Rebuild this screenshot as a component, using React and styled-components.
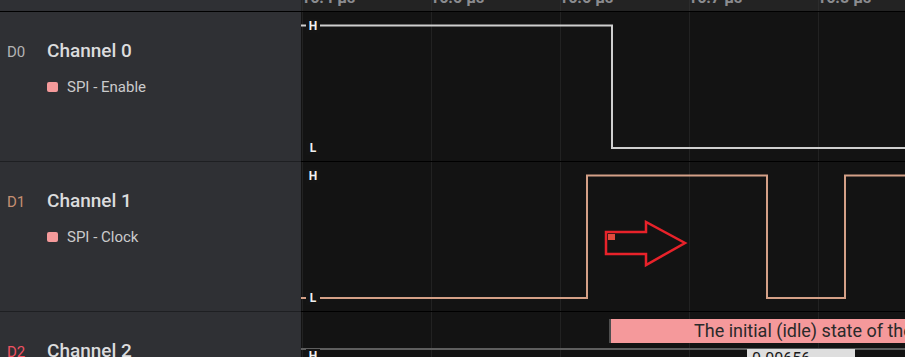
import React from "react";
import styled, {createGlobalStyle} from "styled-components";

const GlobalStyle = createGlobalStyle`
  html, body {
    margin: 0;
    padding: 0;
    background: #131313;
  }
  body {
    font-family: Roboto, "Liberation Sans", sans-serif;
  }
`;

const PANEL_WIDTH = 301;
const GRID_STEP = 129;
const ROW_HEIGHT = 149;
const HIGH_Y = 13.5;
const LOW_Y = 136;

const ticks = ["16.4 µs", "16.5 µs", "16.6 µs", "16.7 µs", "16.8 µs"];

const channels = [
  {
    index: "D0",
    name: "Channel 0",
    indexColor: "#b4b4b4",
    analyzer: "SPI - Enable",
    stroke: "#cfcfcf",
    // edges in trace-local x, starting level
    start: "high",
    edges: [311],
  },
  {
    index: "D1",
    name: "Channel 1",
    indexColor: "#c58f72",
    analyzer: "SPI - Clock",
    stroke: "#d4a087",
    start: "low",
    edges: [286, 466, 544],
  },
  {
    index: "D2",
    name: "Channel 2",
    indexColor: "#ef5262",
    analyzer: null,
  },
];

function buildPath(start, edges, width) {
  let high = start === "high";
  let d = `M0 ${high ? HIGH_Y : LOW_Y}`;
  edges.forEach((x) => {
    d += ` H${x}`;
    high = !high;
    d += ` V${high ? HIGH_Y : LOW_Y}`;
  });
  d += ` H${width}`;
  return d;
}

export default function App() {
  return (
    <>
      <GlobalStyle />
      <Screen>
        <HeaderRow>
          <HeaderSide />
          <Ruler>
            {ticks.map((t) => (
              <Tick key={t}>{t}</Tick>
            ))}
          </Ruler>
        </HeaderRow>

        {channels.map((ch) => (
          <ChannelRow key={ch.index}>
            <ChannelInfo>
              <NameLine>
                <Index color={ch.indexColor}>{ch.index}</Index>
                <Name>{ch.name}</Name>
              </NameLine>
              {ch.analyzer && (
                <AnalyzerLine>
                  <Swatch />
                  <AnalyzerName>{ch.analyzer}</AnalyzerName>
                </AnalyzerLine>
              )}
            </ChannelInfo>

            <Trace>
              {ch.edges ? (
                <>
                  <Wave width="604" height={ROW_HEIGHT}>
                    <path
                      d={buildPath(ch.start, ch.edges, 620)}
                      fill="none"
                      stroke={ch.stroke}
                      strokeWidth="2"
                    />
                  </Wave>
                  <LevelTag top={HIGH_Y}>H</LevelTag>
                  <LevelTag top={LOW_Y}>L</LevelTag>
                  {ch.index === "D1" && (
                    <Arrow width="110" height="60" viewBox="0 0 110 60">
                      <polygon
                        points="5,12 45,12 45,2 84,23 45,45 45,34 5,34"
                        fill="none"
                        stroke="#e8222a"
                        strokeWidth="2.5"
                      />
                      <rect x="7" y="14" width="7" height="6" fill="#e04b3d" />
                    </Arrow>
                  )}
                </>
              ) : (
                <>
                  <Annotation>The initial (idle) state of the</Annotation>
                  <LevelRule />
                  <LevelTag top={44}>H</LevelTag>
                  <Measure>0.00656</Measure>
                </>
              )}
            </Trace>
          </ChannelRow>
        ))}
      </Screen>
    </>
  );
}

const gridBackground = `
  background-image: linear-gradient(to right, #222222 1px, transparent 1px);
  background-size: ${GRID_STEP}px 100%;
  background-position: 1px 0;
`;

const Screen = styled.div`
  width: 905px;
  height: 357px;
  overflow: hidden;
  display: flex;
  flex-direction: column;
  background: #131313;
`;

const HeaderRow = styled.div`
  display: flex;
  flex: 0 0 11px;
  border-bottom: 1px solid #000;
`;

const HeaderSide = styled.div`
  flex: 0 0 ${PANEL_WIDTH}px;
  background: #2f3034;
`;

const Ruler = styled.div`
  flex: 1;
  display: flex;
  overflow: hidden;
  background-color: #232323;
  background-image: linear-gradient(to right, #2c2c2c 1px, transparent 1px);
  background-size: ${GRID_STEP}px 100%;
  background-position: 1px 0;
`;

const Tick = styled.div`
  flex: 0 0 ${GRID_STEP}px;
  margin-top: -12px;
  font-size: 16px;
  font-weight: 700;
  line-height: 20px;
  color: #8b8c90;
  white-space: nowrap;
`;

const ChannelRow = styled.div`
  display: flex;
  flex: 0 0 ${ROW_HEIGHT + 1}px;
`;

const ChannelInfo = styled.div`
  flex: 0 0 ${PANEL_WIDTH}px;
  box-sizing: border-box;
  padding: 28px 0 0 7px;
  background: #2f3034;
  border-bottom: 1px solid #1e1f22;
`;

const NameLine = styled.div`
  display: flex;
  align-items: baseline;
`;

const Index = styled.span`
  width: 40px;
  font-size: 15px;
  line-height: 22px;
  color: ${(p) => p.color};
`;

const Name = styled.span`
  font-size: 19px;
  font-weight: 500;
  line-height: 22px;
  color: #dcdcdd;
`;

const AnalyzerLine = styled.div`
  display: flex;
  align-items: center;
  gap: 9px;
  margin: 15px 0 0 40px;
`;

const Swatch = styled.span`
  width: 11px;
  height: 10px;
  border-radius: 2px;
  background: #f59a9b;
`;

const AnalyzerName = styled.span`
  font-size: 15px;
  line-height: 18px;
  color: #cbcbcc;
`;

const Trace = styled.div`
  position: relative;
  flex: 1;
  overflow: hidden;
  background-color: #131313;
  ${gridBackground}
  border-bottom: 1px solid #000;
`;

const Wave = styled.svg`
  display: block;
`;

const LevelTag = styled.span`
  position: absolute;
  left: 5px;
  top: ${(p) => p.top - 7}px;
  width: 14px;
  height: 14px;
  background: #141414;
  color: #f0f0f0;
  font-size: 12px;
  font-weight: 700;
  line-height: 14px;
  text-align: center;
`;

const Arrow = styled.svg`
  position: absolute;
  left: 300px;
  top: 58px;
`;

const Annotation = styled.div`
  margin: 7px 0 0 308px;
  height: 24px;
  box-sizing: border-box;
  padding-left: 83px;
  border-left: 2px solid #4e4e4e;
  background: #f5999b;
  color: #2a2a2a;
  font-size: 18px;
  line-height: 24px;
  white-space: nowrap;
  overflow: hidden;
`;

const LevelRule = styled.div`
  margin-top: 5px;
  height: 2px;
  background: #5e5e5e;
`;

const Measure = styled.div`
  position: absolute;
  left: 446px;
  top: 37px;
  width: 108px;
  height: 24px;
  box-sizing: border-box;
  padding: 0 0 0 5px;
  background: #dedede;
  color: #1a1a1a;
  font-size: 16px;
  line-height: 20px;
`;
